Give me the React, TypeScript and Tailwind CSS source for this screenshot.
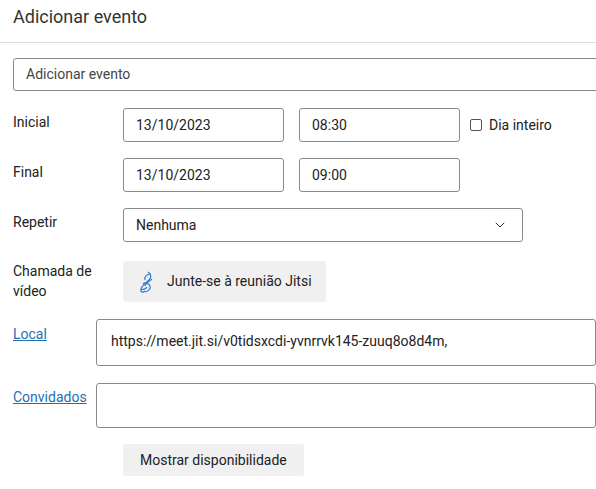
import { ChevronDown } from 'lucide-react';

const field = 'h-[34px] border border-[#8a8a8a] rounded-[3px] px-[12px] flex items-center text-[14px] text-[#222]';

export default function App() {
  return (
    <div className="w-[596px] h-[489px] overflow-hidden bg-white font-[Roboto] text-[#222]">
      <div className="h-[43px] border-b border-[#dcdcdc] px-[13px] pt-[3px] text-[18px] text-[#333]">Adicionar evento</div>
      <div className="pl-[13px]">
        <div className="mt-[15px] h-[33px] w-[600px] border border-[#8a8a8a] rounded-[3px] px-[12px] flex items-center text-[14px] text-[#444]">Adicionar evento</div>

        <div className="mt-[17px] flex items-center">
          <div className="w-[110px] text-[14px] self-start mt-[4px]">Inicial</div>
          <div className={`${field} w-[161px]`}>13/10/2023</div>
          <div className={`${field} w-[161px] ml-[15px]`}>08:30</div>
          <div className="ml-[10px] w-[12px] h-[12px] border border-[#555] rounded-[2px]" />
          <div className="ml-[7px] text-[14px]">Dia inteiro</div>
        </div>

        <div className="mt-[16px] flex items-center">
          <div className="w-[110px] text-[14px] self-start mt-[4px]">Final</div>
          <div className={`${field} w-[161px]`}>13/10/2023</div>
          <div className={`${field} w-[161px] ml-[15px]`}>09:00</div>
        </div>

        <div className="mt-[16px] flex items-center">
          <div className="w-[110px] text-[14px] self-start mt-[4px]">Repetir</div>
          <div className={`${field} w-[400px] justify-between`}>
            <span>Nenhuma</span>
            <ChevronDown size={16} strokeWidth={1.5} className="text-[#333] mr-[2px]" />
          </div>
        </div>

        <div className="mt-[19px] flex">
          <div className="w-[110px] text-[14px] leading-[20px]">Chamada de<br />vídeo</div>
          <button className="h-[41px] px-[14px] bg-[#f0f0f0] rounded-[3px] flex items-center gap-[12px] text-[14px] text-[#222]">
            <svg width="18" height="24" viewBox="0 0 18 24" fill="none" stroke="#2f7bd0" strokeWidth="1.2">
              <path d="M11 2c3 2 4 5 1 8c-3 3-7 5-8 9c-1 3 2 4 4 2" />
              <path d="M13 4c-3 0-6 3-5 6M15 9c-2 2-6 3-7 7M6 14c2-2 6-1 7 2c1 3-2 5-5 6" />
              <path d="M4 19c2 1 5 0 6-2" />
            </svg>
            Junte-se à reunião Jitsi
          </button>
        </div>

        <div className="mt-[17px] flex">
          <a className="w-[110px] text-[14px] text-[#1f6fb2] underline mt-[5px]">Local</a>
          <div className="h-[47px] w-[500px] shrink-0 border border-[#8a8a8a] rounded-[3px] px-[14px] pt-[11px] text-[14px]">https://meet.jit.si/v0tidsxcdi-yvnrrvk145-zuuq8o8d4m,</div>
        </div>

        <div className="mt-[17px] flex">
          <a className="w-[110px] text-[14px] text-[#1f6fb2] underline mt-[4px]">Convidados</a>
          <div className="h-[45px] w-[500px] shrink-0 border border-[#8a8a8a] rounded-[3px]" />
        </div>

        <div className="mt-[16px] ml-[110px]">
          <button className="h-[32px] px-[17px] bg-[#f0f0f0] rounded-[3px] text-[14px] text-[#222]">Mostrar disponibilidade</button>
        </div>
      </div>
    </div>
  );
}
